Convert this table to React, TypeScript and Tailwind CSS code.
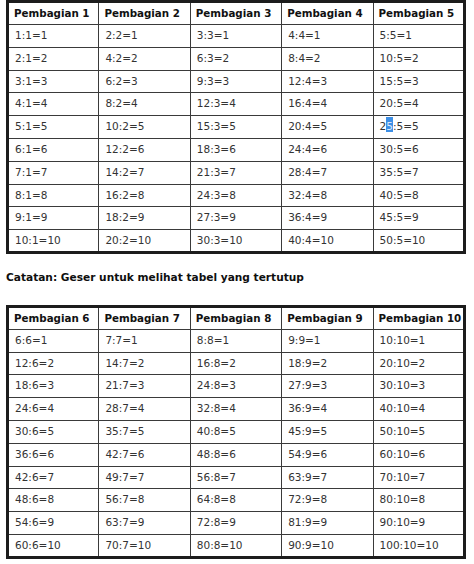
import React from 'react';

const buildRows = (start: number) => {
  const divisors = [0, 1, 2, 3, 4].map((i) => start + i);
  return Array.from({ length: 10 }, (_, r) =>
    divisors.map((d) => `${d * (r + 1)}:${d}=${r + 1}`)
  );
};

const DivTable = ({ start }: { start: number }) => {
  const divisors = [0, 1, 2, 3, 4].map((i) => start + i);
  const rows = buildRows(start);

  return (
    <table className="w-[460px] table-fixed border-collapse border-[3px] border-[#1c1c1c]">
      <thead>
        <tr>
          {divisors.map((d) => (
            <th
              key={d}
              className="h-[23px] whitespace-nowrap border border-[#3a3a3a] px-[5px] text-left text-[10.3px] font-bold text-[#111]"
            >
              Pembagian {d}
            </th>
          ))}
        </tr>
      </thead>
      <tbody>
        {rows.map((row, r) => (
          <tr key={r}>
            {row.map((cell, c) => (
              <td
                key={c}
                className="h-[22.8px] whitespace-nowrap border border-[#3a3a3a] px-[6px] text-[10.5px] text-[#333]"
              >
                {start === 1 && r === 4 && c === 4 ? (
                  <>
                    2
                    <span className="relative bg-[#3d8fe6] text-[#dbe9fb]">
                      5
                      <span className="absolute -top-[3px] left-0 h-[3px] w-full bg-[#3d8fe6]" />
                    </span>
                    :5=5
                  </>
                ) : (
                  cell
                )}
              </td>
            ))}
          </tr>
        ))}
      </tbody>
    </table>
  );
};

export default function App() {
  return (
    <div
      className="h-[564px] w-[474px] overflow-hidden bg-white pl-[6px]"
      style={{ fontFamily: '"DejaVu Sans", Verdana, sans-serif' }}
    >
      <DivTable start={1} />
      <p className="mt-[16px] text-[10.6px] font-bold text-[#0f0f0f]">
        Catatan: Geser untuk melihat tabel yang tertutup
      </p>
      <div className="mt-[19px]">
        <DivTable start={6} />
      </div>
    </div>
  );
}
